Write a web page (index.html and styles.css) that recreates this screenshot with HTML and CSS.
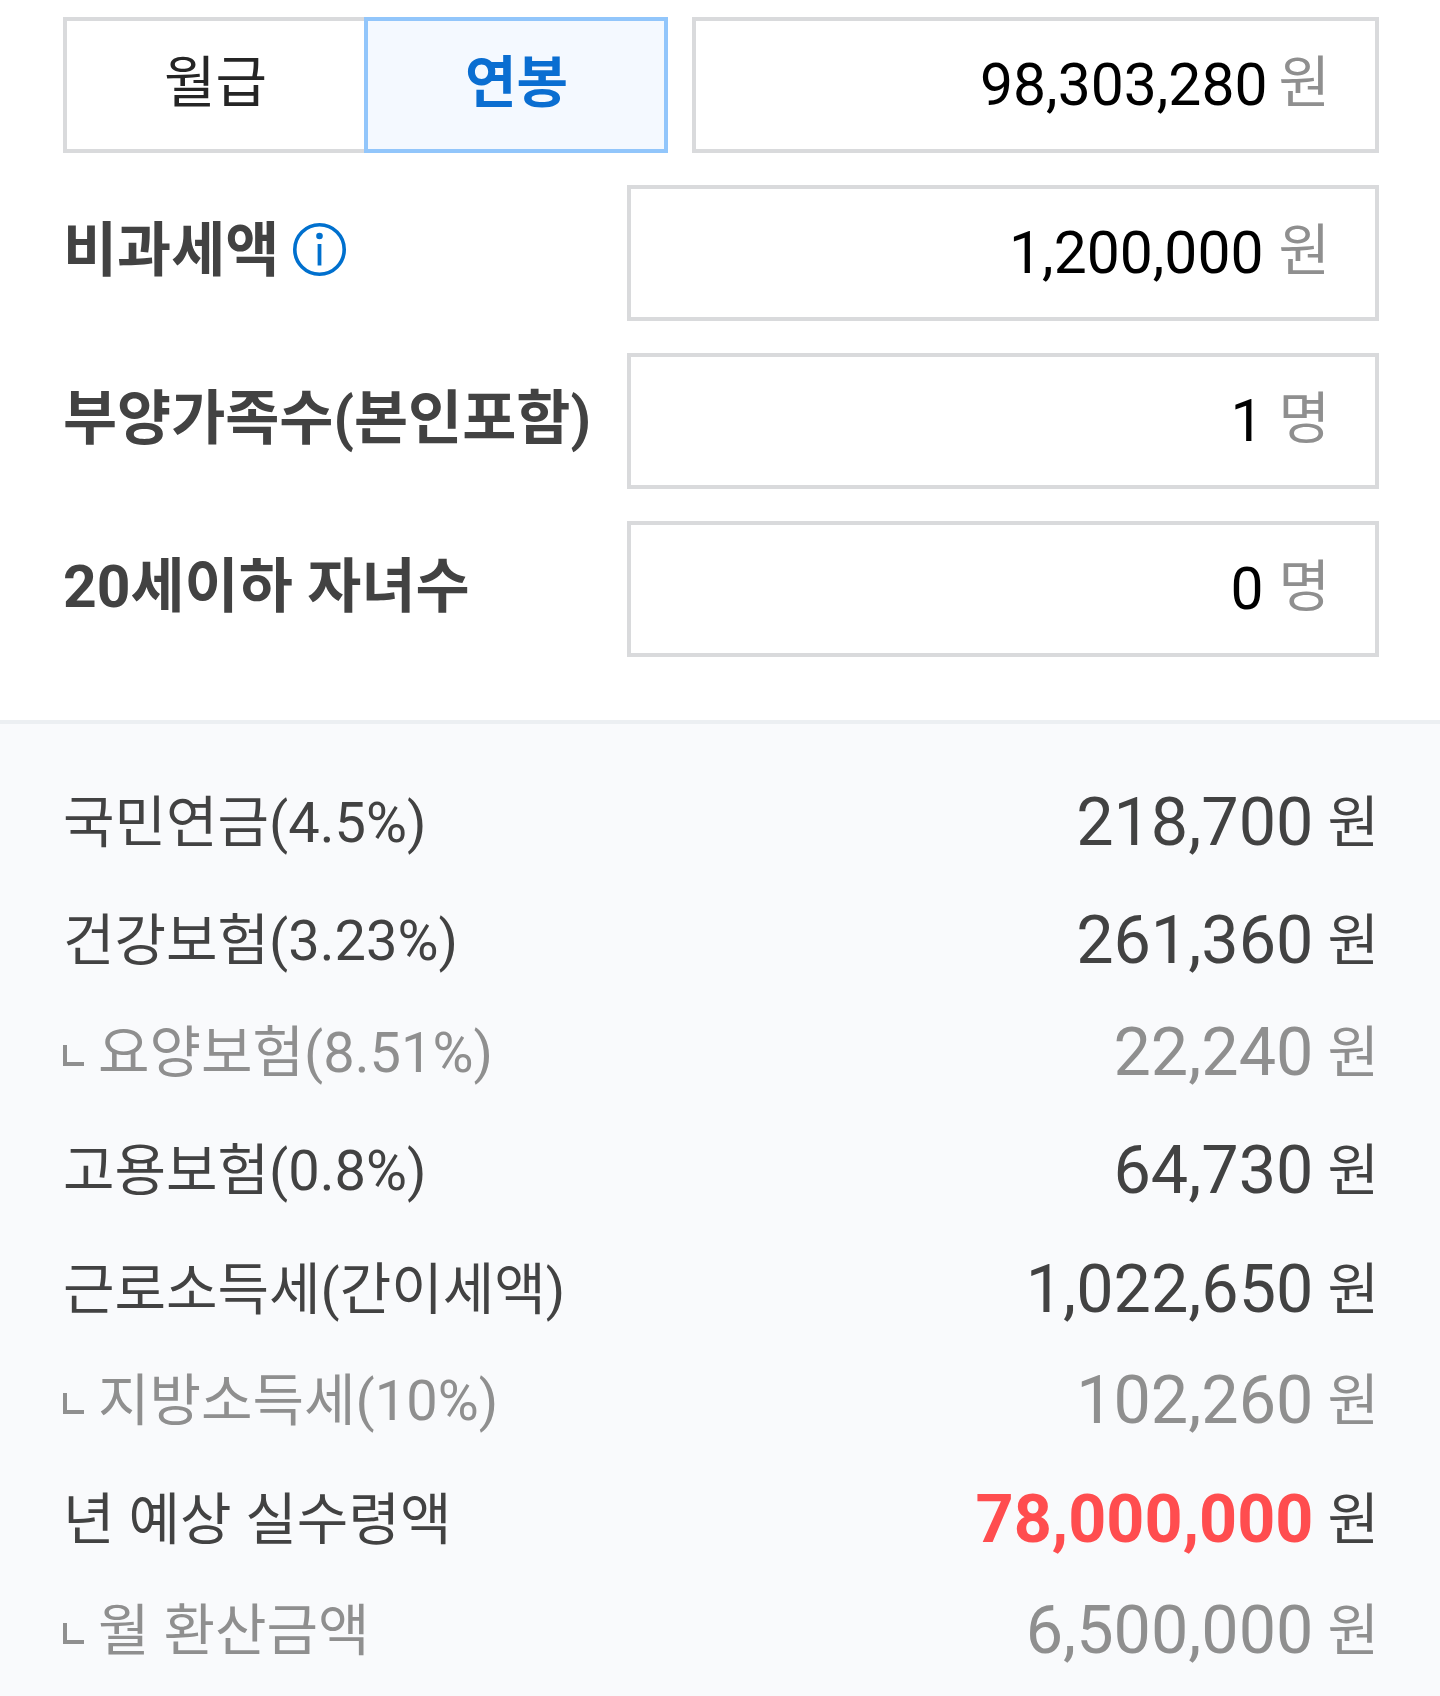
FILE: index.html
```html
<!DOCTYPE html>
<html lang="ko">
<head>
  <meta charset="UTF-8" />
  <meta name="viewport" content="width=device-width, initial-scale=1.0" />
  <title>연봉 계산기</title>
  <link rel="stylesheet" href="styles.css">
</head>
<body>
  <div class="form">
    <div class="row">
      <div class="tabs">
        <div class="tab">월급</div>
        <div class="tab active">연봉</div>
      </div>
      <div class="field salary">
        <span class="value">98,303,280</span>
        <span class="unit">원</span>
      </div>
    </div>

    <div class="row">
      <div class="label">비과세액
        <svg class="info" viewBox="0 0 53 53">
          <circle cx="26.5" cy="26.5" r="24.7" fill="none" stroke="#0070ce" stroke-width="3.6" />
          <circle cx="26.5" cy="13" r="3.3" fill="#0070ce" />
          <path d="M26.5 21v21.5" stroke="#0070ce" stroke-width="3.8" />
        </svg>
      </div>
      <div class="field">
        <span class="value">1,200,000</span>
        <span class="unit">원</span>
      </div>
    </div>

    <div class="row">
      <div class="label">부양가족수(본인포함)</div>
      <div class="field">
        <span class="value">1</span>
        <span class="unit">명</span>
      </div>
    </div>

    <div class="row">
      <div class="label">20세이하 자녀수</div>
      <div class="field">
        <span class="value">0</span>
        <span class="unit">명</span>
      </div>
    </div>
  </div>

  <div class="result">
    <div class="item">
      <span class="name">국민연금(4.5%)</span>
      <span class="amount">218,700</span>
      <span class="won">원</span>
    </div>
    <div class="item">
      <span class="name">건강보험(3.23%)</span>
      <span class="amount">261,360</span>
      <span class="won">원</span>
    </div>
    <div class="item sub">
      <span class="name">요양보험(8.51%)</span>
      <span class="amount">22,240</span>
      <span class="won">원</span>
    </div>
    <div class="item">
      <span class="name">고용보험(0.8%)</span>
      <span class="amount">64,730</span>
      <span class="won">원</span>
    </div>
    <div class="item">
      <span class="name">근로소득세(간이세액)</span>
      <span class="amount">1,022,650</span>
      <span class="won">원</span>
    </div>
    <div class="item sub">
      <span class="name">지방소득세(10%)</span>
      <span class="amount">102,260</span>
      <span class="won">원</span>
    </div>
    <div class="item">
      <span class="name">년 예상 실수령액</span>
      <span class="amount total">78,000,000</span>
      <span class="won">원</span>
    </div>
    <div class="item sub">
      <span class="name">월 환산금액</span>
      <span class="amount">6,500,000</span>
      <span class="won">원</span>
    </div>
  </div>
</body>
</html>
```
FILE: styles.css
```css
:root {
  --text-color: #424242;
  --sub-color: #8f8f8f;
  --line-color: #d9dadc;
  --blue: #0a6ed1;
}

*,
*::before {
  box-sizing: border-box;
}

body {
  margin: 0;
  height: 1696px;
  font-family: Roboto, "Noto Sans CJK KR", sans-serif;
  font-size: 56px;
  background: #fff;
  color: var(--text-color);
  display: flex;
  flex-direction: column;
  overflow: hidden;
}

.form {
  height: 720px;
  padding: 17px 61px 0 63px;
  display: flex;
  flex-direction: column;
  gap: 32px;
}

.row {
  display: flex;
  justify-content: space-between;
  height: 136px;
}

.tabs {
  display: flex;
  width: 605px;
}

.tab {
  width: 305px;
  padding-right: 4px;
  border: 4px solid var(--line-color);
  border-right: none;
  line-height: 124px;
  text-align: center;
  color: #252525;
}

.tab.active {
  width: 304px;
  margin-left: -4px;
  padding: 0 0 0 1px;
  border: 4px solid #92c6fb;
  background: #f4f9ff;
  color: var(--blue);
  font-weight: bold;
}

.label {
  display: flex;
  align-items: center;
  height: 133px;
  line-height: 135px;
  padding-bottom: 2px;
  font-size: 58.8px;
  font-weight: bold;
  white-space: nowrap;
}

.info {
  width: 53px;
  height: 53px;
  margin: 0 0 2px 14px;
}

.field {
  display: flex;
  justify-content: flex-end;
  width: 752px;
  border: 4px solid var(--line-color);
  padding-right: 45px;
  line-height: 127px;
}

.field.salary {
  width: 687px;
}

.value {
  margin-right: 15px;
  font-size: 58.8px;
  color: #000;
}

.salary .value {
  margin-right: 11px;
}

.unit {
  color: var(--sub-color);
  line-height: 124px;
}

.result {
  flex: 1;
  padding: 20.5px 61px 0 63px;
  border-top: 4px solid #eceff2;
  background: #f9fafc;
}

.item {
  display: flex;
  height: 80px;
  margin-top: 38.4px;
  line-height: 80px;
}

.item.sub {
  margin-top: 31.6px;
  color: var(--sub-color);
}

.name {
  flex: 1;
}

/* corner mark in front of the sub items */
.sub .name::before {
  content: "";
  display: inline-block;
  width: 21px;
  height: 21px;
  margin-right: 14px;
  border-left: 4px solid;
  border-bottom: 4px solid;
  vertical-align: 6px;
}

.amount {
  margin-right: 14px;
  font-size: 66.5px;
  line-height: 78px;
}

.amount.total {
  color: #ff4d4f;
  font-weight: bold;
}
```
